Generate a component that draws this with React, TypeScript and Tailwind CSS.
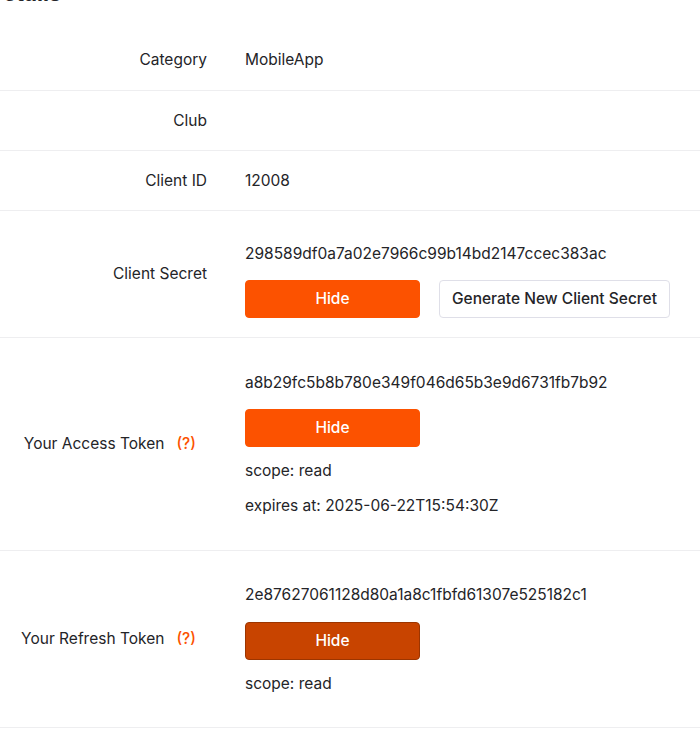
import type { ReactNode } from "react";

function Row({ label, help, children, className = "" }: { label: string; help?: boolean; children: ReactNode; className?: string }) {
  return (
    <div className={`flex items-center border-b border-[#eeeef0] ${className}`}>
      <div className="w-[207px] shrink-0 text-right">
        {label}
        {help && <span className="ml-[12px] mr-[11px] font-medium text-[#fc5200]">(?)</span>}
      </div>
      <div className="pl-[38px]">{children}</div>
    </div>
  );
}

function HideButton({ active }: { active?: boolean }) {
  return (
    <button
      className={
        active
          ? "h-[38px] w-[175px] rounded-[4px] border border-[#9c3500] bg-[#c84400] text-[15.5px] font-medium text-white"
          : "h-[38px] w-[175px] rounded-[4px] border border-[#fc5200] bg-[#fc5200] text-[15.5px] font-medium text-white"
      }
    >
      Hide
    </button>
  );
}

export default function App() {
  return (
    <main className="min-h-screen overflow-hidden bg-white font-['Inter',sans-serif] text-[15.5px] leading-6 text-[#242428]">
      <h2 className="-mt-[18px] -ml-[13px] text-[22px] font-bold leading-[22px]">Details</h2>
      <Row label="Category" className="h-[87px] pt-[26px]">MobileApp</Row>
      <Row label="Club" className="h-[60px]">
        <span />
      </Row>
      <Row label="Client ID" className="h-[60px]">12008</Row>
      <Row label="Client Secret" className="h-[127px]">
        <div className="pt-[12px]">
          <p>298589df0a7a02e7966c99b14bd2147ccec383ac</p>
          <div className="mt-[14px] flex gap-[19px]">
            <HideButton />
            <button className="h-[38px] rounded-[4px] border border-[#dfdfe8] bg-white px-[12px] text-[15.5px] font-medium">
              Generate New Client Secret
            </button>
          </div>
        </div>
      </Row>
      <Row label="Your Access Token" help className="h-[213px]">
        <div>
          <p>a8b29fc5b8b780e349f046d65b3e9d6731fb7b92</p>
          <div className="mt-[14px]">
            <HideButton />
          </div>
          <p className="mt-[12px]">scope: read</p>
          <p className="mt-[11px]">expires at: 2025-06-22T15:54:30Z</p>
        </div>
      </Row>
      <Row label="Your Refresh Token" help className="h-[177px]">
        <div>
          <p>2e87627061128d80a1a8c1fbfd61307e525182c1</p>
          <div className="mt-[15px]">
            <HideButton active />
          </div>
          <p className="mt-[12px]">scope: read</p>
        </div>
      </Row>
    </main>
  );
}
